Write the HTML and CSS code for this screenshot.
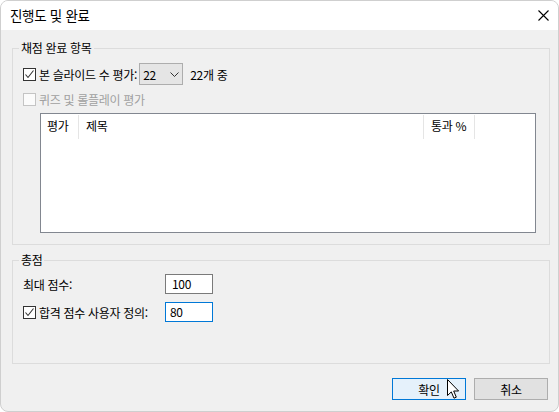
FILE: index.html
```html
<!DOCTYPE html>
<html lang="ko">
<head>
<meta charset="utf-8">
<title>진행도 및 완료</title>
<link rel="stylesheet" href="styles.css">
</head>
<body>
<div class="window">
  <div class="titlebar">
    <span class="title">진행도 및 완료</span>
    <svg class="close" width="11" height="11" viewBox="0 0 11 11"><path d="M0.5 0.5 L10.5 10.5 M10.5 0.5 L0.5 10.5" stroke="#000" stroke-width="1.1" fill="none"/></svg>
  </div>
  <div class="content">
    <div class="group g1">
      <span class="legend">채점 완료 항목</span>
      <div class="row r1">
        <span class="cb"><svg width="11" height="11" viewBox="0 0 11 11"><path d="M1.5 5.5 L4 8.5 L9.5 1.5" stroke="#333" stroke-width="1.1" fill="none"/></svg></span>
        <span class="label">본 슬라이드 수 평가:</span>
        <div class="select"><span>22</span><svg width="9" height="5" viewBox="0 0 9 5"><path d="M0.5 0.5 L4.5 4.5 L8.5 0.5" stroke="#333" fill="none"/></svg></div>
        <span class="count">22개 중</span>
      </div>
      <div class="row r2 disabled">
        <span class="cb cb-off"></span>
        <span class="label">퀴즈 및 롤플레이 평가</span>
      </div>
      <div class="list">
        <div class="list-head">
          <div class="col c1">평가</div>
          <div class="col c2">제목</div>
          <div class="col c3">통과 %</div>
        </div>
      </div>
    </div>
    <div class="group g2">
      <span class="legend">총점</span>
      <div class="frow f1">
        <span class="flabel">최대 점수:</span>
        <div class="input">100</div>
      </div>
      <div class="frow f2">
        <span class="flabel"><span class="cb"><svg width="11" height="11" viewBox="0 0 11 11"><path d="M1.5 5.5 L4 8.5 L9.5 1.5" stroke="#333" stroke-width="1.1" fill="none"/></svg></span>합격 점수 사용자 정의:</span>
        <div class="input focus">80</div>
      </div>
    </div>
    <div class="buttons">
      <div class="btn primary">확인
        <svg class="cursor" width="13" height="21" viewBox="0 0 13 21"><path d="M0.5 0.5 L0.5 16.5 L4.3 12.9 L7 19.2 L9.3 18.2 L6.7 12 L11.6 12 Z" fill="#fff" stroke="#000" stroke-width="1" stroke-linejoin="miter"/></svg>
      </div>
      <div class="btn">취소</div>
    </div>
  </div>
</div>
</body>
</html>
```
FILE: styles.css
```css
* { box-sizing: border-box; }
html, body { margin: 0; padding: 0; background: #ffffff; }
body {
  font-family: "Noto Sans CJK KR", "Noto Sans", sans-serif;
  font-size: 12px;
  letter-spacing: -0.3px;
  color: #000;
}
.window {
  width: 559px;
  height: 412px;
  border: 1px solid #cfcfcf;
  border-radius: 8px;
  overflow: hidden;
  display: flex;
  flex-direction: column;
  background: #f0f0f0;
}
.titlebar {
  height: 29px;
  flex: none;
  background: #fff;
  display: flex;
  align-items: center;
  justify-content: space-between;
  padding: 0 9px 1px 9px;
}
.title { font-size: 13.5px; letter-spacing: -0.3px; }
.close { display: block; margin-top: 1px; }
.content {
  flex: 1;
  display: flex;
  flex-direction: column;
  padding: 18px 8px 11px 11px;
}
.group {
  position: relative;
  border: 1px solid #dcdcdc;
  padding-left: 10px;
}
.legend {
  position: absolute;
  top: -9px;
  left: 6px;
  padding: 0 2px;
  line-height: 16px;
  background: #f0f0f0;
}
.g1 { padding-top: 14px; padding-bottom: 11px; flex: none; }
.g2 { flex: 1; margin-top: 15px; padding-top: 13px; }
.row { display: flex; align-items: center; }
.r1 { height: 22px; }
.r2 { height: 18px; margin-top: 5px; }
.cb {
  width: 13px;
  height: 13px;
  border: 1px solid #333;
  background: #fff;
  display: inline-flex;
  align-items: center;
  justify-content: center;
  flex: none;
  margin-right: 3px;
}
.cb svg { display: block; }
.cb-off { border-color: #c4c4c4; background: #fbfbfb; }
.disabled .label { color: #a0a0a0; }
.select {
  margin-left: 2px;
  width: 44px;
  height: 22px;
  border: 1px solid #adadad;
  background: #e5e5e5;
  display: flex;
  align-items: center;
  justify-content: space-between;
  padding: 0 3px 0 3px;
}
.select svg { display: block; margin-top: 1px; }
.count { margin-left: 7px; }
.list {
  margin: 5px 13px 0 17px;
  height: 120px;
  border: 1px solid #828790;
  background: #fff;
}
.list-head {
  display: flex;
  height: 25px;
  padding-top: 1px;
}
.col {
  border-right: 1px solid #e5e5e5;
  padding-left: 6px;
  line-height: 22px;
  height: 24px;
}
.c1 { width: 38px; }
.c2 { width: 345px; padding-left: 7px; }
.c3 { width: 51px; padding-left: 7px; }
.frow {
  display: flex;
  align-items: center;
  height: 20px;
}
.f2 { margin-top: 8px; }
.flabel {
  width: 142px;
  display: flex;
  align-items: center;
}
.input {
  width: 48px;
  height: 20px;
  border: 1px solid #7a7a7a;
  background: #fff;
  padding-left: 6px;
  line-height: 18px;
}
.input.focus { border-color: #0078d7; padding-left: 4px; }
.buttons {
  display: flex;
  justify-content: flex-end;
  gap: 8px;
  margin-top: 14px;
  padding-right: 2px;
}
.btn {
  position: relative;
  width: 74px;
  height: 22px;
  border: 1px solid #adadad;
  background: #e1e1e1;
  display: flex;
  align-items: center;
  justify-content: center;
}
.btn.primary { border-color: #0078d7; background: #e5f1fb; }
.cursor { position: absolute; left: 54px; top: 0px; }
```
